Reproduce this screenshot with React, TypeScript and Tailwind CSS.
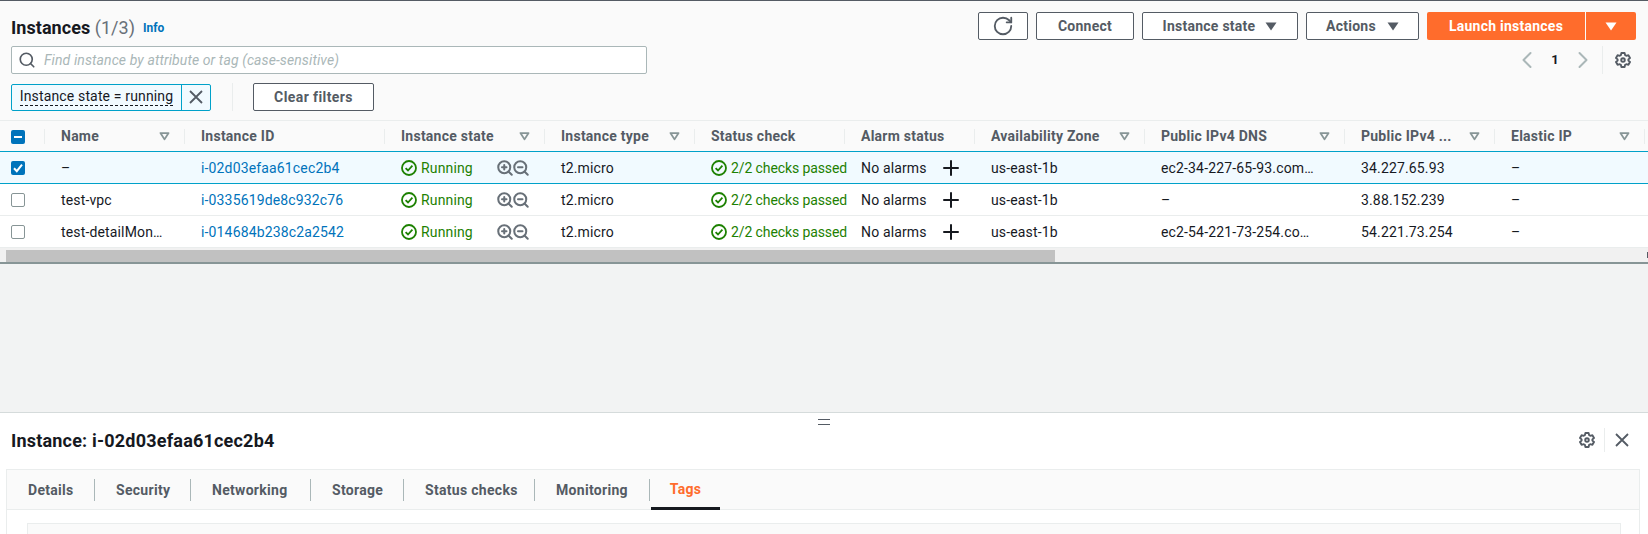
import React from 'react';
import { Plus, RotateCw, Search, ZoomIn, ZoomOut, ChevronLeft, ChevronRight } from 'lucide-react';

const FONT = "font-['Roboto','Liberation_Sans',sans-serif]";

const columns = [
  { title: 'Name', width: 'w-[140px]', filter: true },
  { title: 'Instance ID', width: 'w-[200px]', filter: false },
  { title: 'Instance state', width: 'w-[160px]', filter: true },
  { title: 'Instance type', width: 'w-[150px]', filter: true },
  { title: 'Status check', width: 'w-[150px]', filter: false },
  { title: 'Alarm status', width: 'w-[130px]', filter: false },
  { title: 'Availability Zone', width: 'w-[170px]', filter: true },
  { title: 'Public IPv4 DNS', width: 'w-[200px]', filter: true },
  { title: 'Public IPv4 ...', width: 'w-[150px]', filter: true },
  { title: 'Elastic IP', width: 'w-[150px]', filter: true },
];

const rows = [
  { name: '–', id: 'i-02d03efaa61cec2b4', dns: 'ec2-34-227-65-93.com…', ip: '34.227.65.93', selected: true },
  { name: 'test-vpc', id: 'i-0335619de8c932c76', dns: '–', ip: '3.88.152.239', selected: false },
  { name: 'test-detailMon…', id: 'i-014684b238c2a2542', dns: 'ec2-54-221-73-254.co…', ip: '54.221.73.254', selected: false },
];

const tabs = [
  { label: 'Details', width: 'w-[88px]' },
  { label: 'Security', width: 'w-[96px]' },
  { label: 'Networking', width: 'w-[120px]' },
  { label: 'Storage', width: 'w-[93px]' },
  { label: 'Status checks', width: 'w-[131px]' },
  { label: 'Monitoring', width: 'w-[115px]' },
];

const Gear = ({ className }: { className?: string }) => (
  <svg viewBox="0 0 16 16" fill="none" stroke="currentColor" strokeWidth="1.9" className={className}>
    <path d="M6.4 1h3.2l.5 2.1 1.2.7 2.1-.6 1.6 2.8-1.6 1.4v1.2l1.6 1.4-1.6 2.8-2.1-.6-1.2.7-.5 2.1H6.4l-.5-2.1-1.2-.7-2.1.6-1.6-2.8 1.6-1.4V7.4L1 6l1.6-2.8 2.1.6 1.2-.7z" strokeLinejoin="round" />
    <circle cx="8" cy="8" r="1.8" />
  </svg>
);

const Cross = () => (
  <svg viewBox="0 0 16 16" fill="none" stroke="#545b64" strokeWidth="1.8" className="w-4 h-4">
    <path d="M2 2l12 12M14 2L2 14" />
  </svg>
);

const CheckCircle = () => (
  <svg viewBox="0 0 16 16" fill="none" stroke="#1d8102" strokeWidth="1.8" className="w-4 h-4 shrink-0">
    <circle cx="8" cy="8" r="7" />
    <path d="M4.6 8.1l2.4 2.4 4.4-4.8" />
  </svg>
);

const Caret = ({ color }: { color: string }) => (
  <svg viewBox="0 0 12 9" className="w-[12px] h-[9px]" fill={color}>
    <path d="M0.5 0.5h11L6 8.5z" />
  </svg>
);

const FilterCaret = () => (
  <svg viewBox="0 0 12 10" className="w-[11px] h-[9px]" fill="none" stroke="#879596" strokeWidth="2">
    <path d="M1.5 1.2h9L6 8.2z" strokeLinejoin="round" />
  </svg>
);

const OutlineButton = ({ children, width }: { children: React.ReactNode; width: string }) => (
  <button className={`${width} h-7 flex items-center justify-center bg-white border border-[#545b64] rounded-[2px] text-[14px] font-bold tracking-[0.25px] text-[#545b64]`}>
    {children}
  </button>
);

const Checkbox = ({ selected }: { selected: boolean }) =>
  selected ? (
    <span className="w-[14px] h-[14px] rounded-[2px] bg-[#0073bb] flex items-center justify-center">
      <svg viewBox="0 0 14 14" className="w-[14px] h-[14px]" fill="none" stroke="white" strokeWidth="2">
        <path d="M3 7.2l2.8 3L11 3.6" />
      </svg>
    </span>
  ) : (
    <span className="w-[14px] h-[14px] rounded-[2px] bg-white border border-[#879596]" />
  );

export default function App() {
  return (
    <div className={`${FONT} w-[1648px] h-[534px] overflow-hidden bg-[#f2f3f3] text-[14px] text-[#16191f]`}>
      <div className="bg-[#fafafa] border-t border-[#545b64]">
        <div className="flex justify-between h-[119px] pl-[11px] pr-[12px] pt-[11px]">
          <div className="w-[636px]">
            <div className="h-7 pt-[3px] flex items-center gap-2">
              <h1 className="text-[18px] font-bold leading-none tracking-[0.05px]">
                Instances <span className="font-normal text-[#687078]">(1/3)</span>
              </h1>
              <a className="text-[12px] font-bold text-[#0073bb]">Info</a>
            </div>
            <div className="mt-[6px] h-7 bg-white border border-[#aab7b8] rounded-[2px] flex items-center pl-[6px] gap-2">
              <Search className="w-[18px] h-[18px] text-[#545b64]" strokeWidth={2.2} />
              <span className="italic text-[#aab7b8] tracking-[0.1px]">Find instance by attribute or tag (case-sensitive)</span>
            </div>
            <div className="mt-[9px] flex items-center">
              <div className="w-[200px] h-[27px] flex bg-[#f1faff] border border-[#00a1c9] rounded-[2px]">
                <div className="w-[169px] flex items-center justify-center tracking-[0.15px]">
                  <span className="border-b border-dashed border-[#16191f] leading-[17px]">Instance state = running</span>
                </div>
                <div className="flex-1 border-l border-[#00a1c9] flex items-center justify-center">
                  <Cross />
                </div>
              </div>
              <div className="ml-[21px] w-px h-7 bg-[#eaeded]" />
              <button className="ml-[20px] w-[121px] h-7 pt-px bg-white border border-[#545b64] rounded-[2px] text-[14px] font-bold tracking-[0.4px] text-[#545b64]">
                Clear filters
              </button>
            </div>
          </div>
          <div className="flex flex-col items-end">
            <div className="flex gap-2">
              <OutlineButton width="w-[50px]">
                <RotateCw className="w-[22px] h-[22px]" strokeWidth={2} />
              </OutlineButton>
              <OutlineButton width="w-[98px]">Connect</OutlineButton>
              <OutlineButton width="w-[156px]">
                Instance state
                <span className="ml-[10px]"><Caret color="#545b64" /></span>
              </OutlineButton>
              <OutlineButton width="w-[113px]">
                Actions
                <span className="ml-[11px]"><Caret color="#545b64" /></span>
              </OutlineButton>
              <div className="flex gap-px">
                <button className="w-[158px] h-7 bg-[#ff6c2c] rounded-l-[2px] text-white font-bold tracking-[0.25px]">
                  Launch instances
                </button>
                <button className="w-[50px] h-7 bg-[#ff6c2c] rounded-r-[2px] flex items-center justify-center">
                  <Caret color="#ffffff" />
                </button>
              </div>
            </div>
            <div className="mt-[6px] h-7 flex items-center text-[#16191f]">
              <ChevronLeft className="w-7 h-7 text-[#aab7b8]" strokeWidth={1.7} />
              <span className="w-7 text-center font-bold text-[13px]">1</span>
              <ChevronRight className="w-7 h-7 text-[#aab7b8]" strokeWidth={1.7} />
              <div className="ml-[5px] w-px h-7 bg-[#eaeded]" />
              <Gear className="ml-[12px] mr-[5px] w-4 h-4 text-[#545b64]" />
            </div>
          </div>
        </div>

        <div className="flex h-[32px] border-t border-[#eaeded] items-center">
          <div className="w-[45px] h-full flex items-center justify-between pl-[11px]">
            <span className="w-[14px] h-[14px] rounded-[2px] bg-[#0073bb] flex items-center justify-center">
              <span className="w-2 h-[2px] bg-white" />
            </span>
            <span className="w-px h-[15px] bg-[#eaeded]" />
          </div>
          {columns.map((col) => (
            <div key={col.title} className={`${col.width} h-full flex items-center justify-between pl-[16px] font-bold tracking-[0.25px] text-[#545b64]`}>
              <span className="whitespace-nowrap">{col.title}</span>
              <span className="flex items-center gap-[14px]">
                {col.filter && <FilterCaret />}
                <span className="w-px h-[15px] bg-[#eaeded]" />
              </span>
            </div>
          ))}
        </div>
      </div>

      <div className="bg-white">
        {rows.map((row) => (
          <div
            key={row.id}
            className={`flex items-center h-8 pt-px whitespace-nowrap tracking-[0.15px] border-b ${
              row.selected ? 'bg-[#f1faff] border-[#00a1c9] shadow-[0_-1px_0_#00a1c9]' : 'border-[#eaeded]'
            }`}
          >
            <div className="w-[45px] pl-[11px] flex items-center">
              <Checkbox selected={row.selected} />
            </div>
            <div className="w-[140px] pl-[16px]">{row.name}</div>
            <div className="w-[200px] pl-[16px] text-[#0073bb]">{row.id}</div>
            <div className="w-[160px] pl-[16px] flex items-center text-[#1d8102]">
              <CheckCircle />
              <span className="ml-[4px] w-[75px]">Running</span>
              <ZoomIn className="w-[18px] h-[18px] text-[#687078]" strokeWidth={2.7} />
              <ZoomOut className="w-[18px] h-[18px] -ml-[2px] text-[#687078]" strokeWidth={2.7} />
            </div>
            <div className="w-[150px] pl-[16px]">t2.micro</div>
            <div className="w-[150px] pl-[16px] flex items-center text-[#1d8102]">
              <CheckCircle />
              <span className="ml-[4px] tracking-[-0.1px]">2/2 checks passed</span>
            </div>
            <div className="w-[130px] pl-[16px] flex items-center">
              <span className="w-[78px]">No alarms</span>
              <Plus className="w-6 h-6" strokeWidth={2} />
            </div>
            <div className="w-[170px] pl-[16px]">us-east-1b</div>
            <div className="w-[200px] pl-[16px]">{row.dns}</div>
            <div className="w-[150px] pl-[16px]">{row.ip}</div>
            <div className="w-[150px] pl-[16px]">–</div>
          </div>
        ))}
      </div>

      <div className="h-[16px] bg-[#f1f1f1] border-b-2 border-[#879596] pt-[2px] pl-[6px] flex justify-between">
        <div className="w-[1049px] h-[12px] bg-[#c1c1c1]" />
        <div className="w-px h-[6px] mt-[2px] bg-[#545b64]" />
      </div>

      <div className="h-[148px]" />

      <div className="relative h-[122px] bg-white border-t border-[#d5dbdb] overflow-hidden">
        <span className="absolute left-[818px] top-[6px] w-3 h-[6px] border-y border-[#545b64]" />
        <div className="h-[56px] pb-[2px] pl-[11px] pr-[18px] flex items-center justify-between">
          <h2 className="text-[18px] font-bold tracking-[0.2px]">Instance: i-02d03efaa61cec2b4</h2>
          <div className="flex items-center">
            <Gear className="w-4 h-4 text-[#545b64]" />
            <span className="ml-[9px] w-px h-6 bg-[#eaeded]" />
            <span className="ml-[9px]"><Cross /></span>
          </div>
        </div>
        <div className="ml-[6px] w-[1634px] h-[80px] border border-[#eaeded]">
          <div className="flex items-center h-[40px] bg-[#fafafa] border-b border-[#eaeded] font-bold tracking-[0.3px] text-[#545b64]">
            {tabs.map((tab) => (
              <div key={tab.label} className={`${tab.width} h-[22px] pt-px flex items-center pl-[21px] border-r border-[#aab7b8]`}>
                {tab.label}
              </div>
            ))}
            <div className="ml-[1px] w-[69px] h-[40px] flex items-center justify-center text-[#ff6c2c] border-b-[3px] border-[#16191f] pt-[3px]">
              Tags
            </div>
          </div>
          <div className="mt-[13px] ml-[20px] w-[1594px] h-[40px] bg-[#fafafa] border border-[#eaeded]" />
        </div>
      </div>
    </div>
  );
}
